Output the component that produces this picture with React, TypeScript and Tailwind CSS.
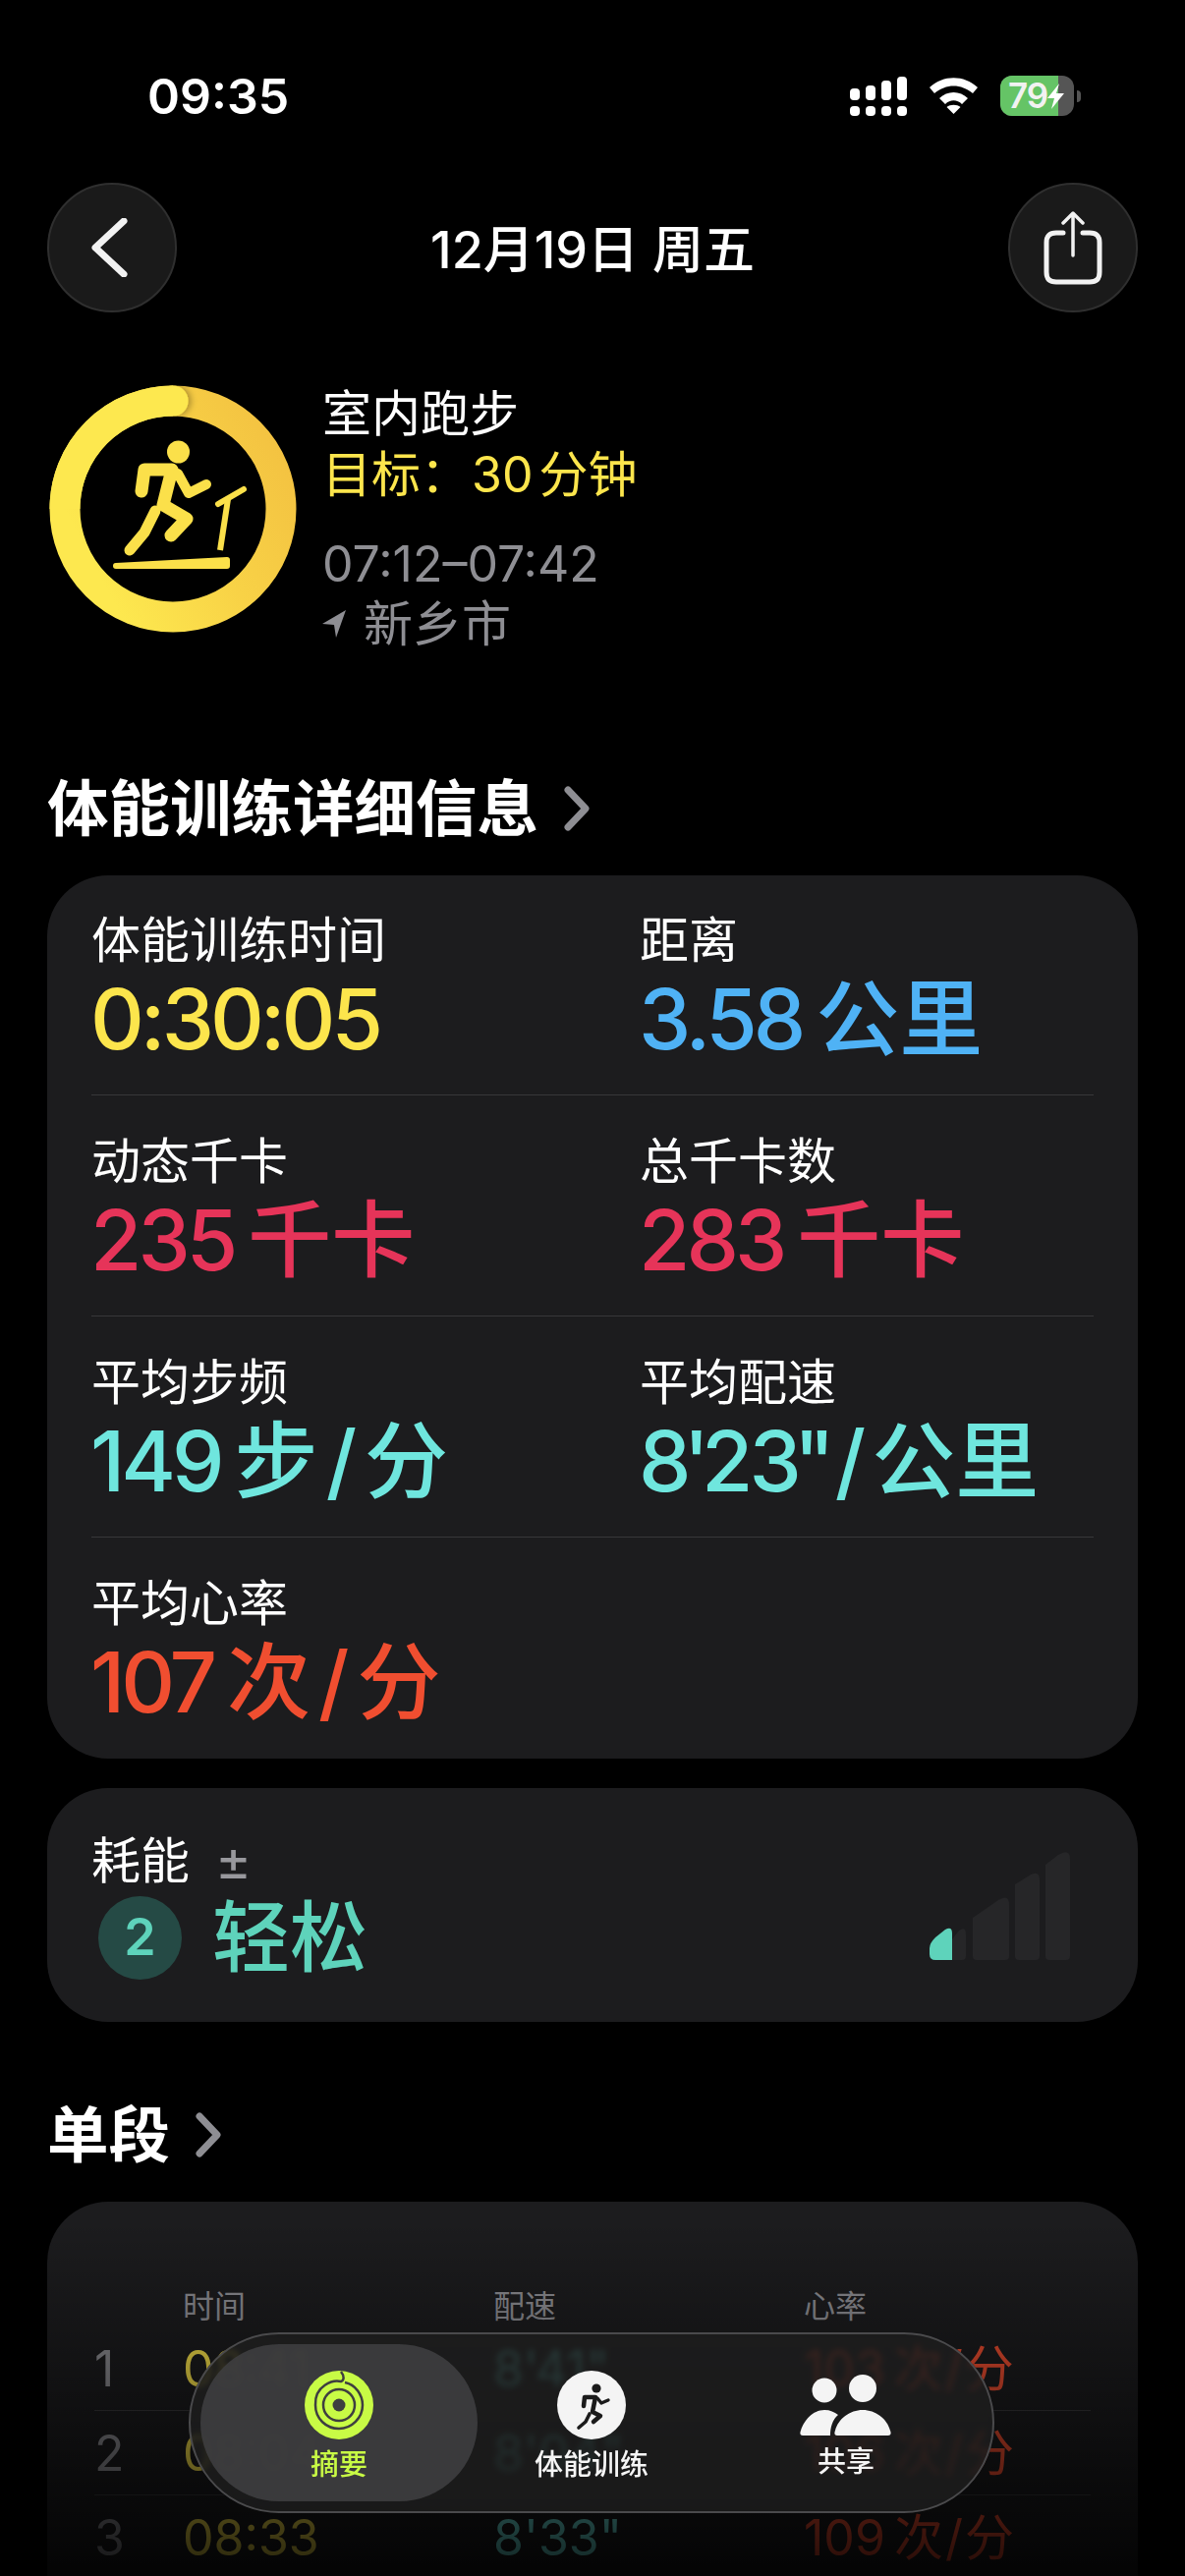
const CJK = "font-['Inter','Noto_Sans_CJK_SC',sans-serif]";

function Metric({ label, value, unit, color }: { label: string; value: React.ReactNode; unit?: React.ReactNode; color: string }) {
  return (
    <div className="flex flex-col">
      <div className="text-[50px] leading-[62px] text-white">{label}</div>
      <div className={`flex h-[100px] items-center whitespace-nowrap text-[85px] font-medium ${color}`}>
        <span className="-ml-[1px] tracking-[-4px]">{value}</span>
        {unit && <span className="ml-[14px]">{unit}</span>}
      </div>
    </div>
  );
}

function PerMinute({ word }: { word: string }) {
  return (
    <>
      {word}
      <span className="mx-[8px]">/</span>分
    </>
  );
}

function StatusBar() {
  return (
    <div className="flex h-[186px] items-start justify-between pr-[106px] pl-[150px] pt-[68px]">
      <span className="text-[50px] leading-[60px] font-semibold text-white">09:35</span>
      <div className="flex items-center gap-[23px] pt-[9px]">
        <svg width="58" height="40" viewBox="0 0 58 40" fill="#fff">
          <rect x="0" y="12" width="10" height="12" rx="4" />
          <rect x="16" y="9" width="10" height="15" rx="4" />
          <rect x="32" y="4" width="10" height="20" rx="4" />
          <rect x="48" y="0" width="10" height="24" rx="4" />
          <rect x="0" y="30" width="10" height="10" rx="4" />
          <rect x="16" y="30" width="10" height="10" rx="4" />
          <rect x="32" y="30" width="10" height="10" rx="4" />
          <rect x="48" y="30" width="10" height="10" rx="4" />
        </svg>
        <svg width="49" height="37" viewBox="0 0 49 37" fill="#fff">
          <path d="M0 10C14 -3 35 -3 49 10L44 16C32 6 17 6 5 16Z" />
          <path d="M10 21C18 13 31 13 39 21L33 27C28 22 21 22 16 27Z" />
          <path d="M24.5 37L17.5 30C21 27 28 27 31.5 30Z" />
        </svg>
        <div className="flex items-center gap-[3px]">
          <div className="relative flex h-[41px] w-[75px] items-center overflow-hidden rounded-[12px] bg-[#555]">
            <div className="absolute inset-y-0 left-0 w-[59px] bg-[#65c466]" />
            <span className="relative ml-[8px] text-[35px] leading-none font-semibold tracking-[-1px] text-[#f2f2f2]">79</span>
            <svg className="relative" width="17" height="26" viewBox="0 0 17 26" fill="#fff">
              <path d="M12 0L0 15H7L4 26L17 10H9Z" />
            </svg>
          </div>
          <div className="h-[12px] w-[4px] rounded-r-full bg-[#555]" />
        </div>
      </div>
    </div>
  );
}

function NavBar() {
  return (
    <div className="flex items-center justify-between px-[48px]">
      <div className="flex size-[132px] items-center justify-center rounded-full border-2 border-[#2f2f2f] bg-[#1a1a1a] pr-[6px]">
        <svg width="40" height="60" viewBox="0 0 40 60" fill="none" stroke="#f2f2f2" strokeWidth="7" strokeLinecap="round" strokeLinejoin="round">
          <path d="M35 3L6 30L35 57" />
        </svg>
      </div>
      <span className="mt-[5px] text-[52px] leading-none font-medium text-white">12月19日 周五</span>
      <div className="flex size-[132px] items-center justify-center rounded-full border-2 border-[#2f2f2f] bg-[#1a1a1a]">
        <svg width="60" height="76" viewBox="0 0 60 76" fill="none" stroke="#f2f2f2" strokeWidth="3.5" strokeLinecap="round" strokeLinejoin="round">
          <path d="M30 46V3M20 13L30 3L40 13" />
          <path d="M20 23H13C6 23 3 26 3 33V63C3 70 6 73 13 73H47C54 73 57 70 57 63V33C57 26 54 23 47 23H40" strokeWidth="5" />
        </svg>
      </div>
    </div>
  );
}

function WorkoutRing() {
  return (
    <svg width="252" height="252" viewBox="0 0 252 252" fill="none">
      <defs>
        <linearGradient id="ring" x1="1" y1="0.1" x2="0.05" y2="0.6">
          <stop offset="0" stopColor="#f3c141" />
          <stop offset="0.5" stopColor="#f8d246" />
          <stop offset="1" stopColor="#fde84f" />
        </linearGradient>
        <filter id="capShadow" x="-60%" y="-60%" width="220%" height="220%">
          <feDropShadow dx="3" dy="0" stdDeviation="3" floodColor="#000" floodOpacity="0.3" />
        </filter>
      </defs>
      <circle cx="126" cy="126" r="110" stroke="url(#ring)" strokeWidth="31" />
      <circle cx="126" cy="16" r="15.5" fill="#fde84f" filter="url(#capShadow)" />
      <path d="M126 16A110 110 0 0 0 16 126" stroke="#fde84f" strokeWidth="31" />
      <g stroke="#fbe04a" strokeLinecap="round" strokeLinejoin="round">
        <circle cx="131.5" cy="68" r="11.5" fill="#fbe04a" stroke="none" />
        <path d="M94 108L97 86H125L116 122L140 136L124 153" strokeWidth="13" />
        <path d="M131 90L142 110L160 101" strokeWidth="10" />
        <path d="M108 128L97 150L82 168" strokeWidth="11" />
        <path d="M68 184L181 178V184Z" fill="#fbe04a" strokeWidth="6" />
        <path d="M174 168L182 116" strokeWidth="6" strokeLinecap="butt" />
        <path d="M172 121L198 106" strokeWidth="6" />
      </g>
    </svg>
  );
}

function WorkoutHeader() {
  return (
    <div className="mt-[74px] flex gap-[26px] pl-[50px]">
      <WorkoutRing />
      <div className="-mt-[2px] flex flex-col text-[50px]">
        <div className="leading-[62px] text-white">室内跑步</div>
        <div className="leading-[62px] text-[#fce54c]">
          目标：<span className="ml-[2px]">30</span>
          <span className="ml-[6px]">分钟</span>
        </div>
        <div className="mt-[29px] leading-[62px] text-[#8e8e93]">07:12–07:42</div>
        <div className="flex items-center gap-[18px] leading-[60px] text-[#8e8e93]">
          <svg width="24" height="28" viewBox="0 0 24 28" fill="#8e8e93">
            <path d="M24 0L0 14L12 15L14 28Z" />
          </svg>
          新乡市
        </div>
      </div>
    </div>
  );
}

function SectionTitle({ text }: { text: string }) {
  return (
    <div className="flex items-center gap-[24px] pl-[48px]">
      <span className="text-[62.5px] leading-[76px] font-bold text-white">{text}</span>
      <svg width="30" height="48" viewBox="0 0 30 48" fill="none" stroke="#8e8e93" strokeWidth="7" strokeLinecap="round" strokeLinejoin="round">
        <path d="M6 5L24 24L6 43" />
      </svg>
    </div>
  );
}

function MetricsCard() {
  return (
    <div className="mx-[48px] mt-[30px] rounded-[62px] bg-[#1c1c1e] px-[45px] pb-[27px]">
      <div className="grid grid-cols-[558px_1fr] border-b border-[#38383a] pt-[35px] pb-[26px]">
        <Metric label="体能训练时间" value="0:30:05" color="text-[#fce54c]" />
        <Metric label="距离" value="3.58" unit="公里" color="text-[#4fb2f5]" />
      </div>
      <div className="grid grid-cols-[558px_1fr] border-b border-[#38383a] pt-[36px] pb-[26px]">
        <Metric label="动态千卡" value="235" unit="千卡" color="text-[#e63459]" />
        <Metric label="总千卡数" value="283" unit="千卡" color="text-[#e63459]" />
      </div>
      <div className="grid grid-cols-[558px_1fr] border-b border-[#38383a] pt-[36px] pb-[26px]">
        <Metric label="平均步频" value="149" unit={<PerMinute word="步" />} color="text-[#6fe6de]" />
        <Metric
          label="平均配速"
          value={
            <>
              8<span className="-mx-[4px]">'</span>23<span className="-mx-[4px]">"</span>
            </>
          }
          unit={
            <>
              <span className="-ml-[6px] mr-[6px]">/</span>公里
            </>
          }
          color="text-[#6fe6de]"
        />
      </div>
      <div className="pt-[36px]">
        <Metric label="平均心率" value="107" unit={<PerMinute word="次" />} color="text-[#f04e30]" />
      </div>
    </div>
  );
}

function EffortCard() {
  return (
    <div className="mx-[48px] mt-[30px] flex h-[238px] items-end justify-between rounded-[62px] bg-[#1c1c1e] pr-[69px] pb-[42px] pl-[45px]">
      <div className="flex flex-col">
        <div className="flex items-center gap-[26px] text-[50px] leading-[60px] text-white">
          耗能
          <span className="text-[56px] leading-none text-[#98989d]">±</span>
        </div>
        <div className="mt-[4px] flex items-center gap-[31px] pl-[7px]">
          <div className="flex size-[85px] items-center justify-center rounded-full bg-[#254a45] text-[52px] font-semibold text-[#5ed3bb]">2</div>
          <span className="text-[79px] leading-[88px] font-medium text-[#5ed3bb]">轻松</span>
        </div>
      </div>
      <svg className="mb-[21px]" width="143" height="111" viewBox="0 0 143 111">
        <path d="M23 111V90L30 81Q37 76 37 85V107Q37 111 33 111Z" fill="#262628" />
        <path d="M44 107V68L70 50Q81 43 81 55V107Q81 111 77 111H48Q44 111 44 107Z" fill="#262628" />
        <path d="M87 107V34L100 26Q112 18 112 30V107Q112 111 108 111H91Q87 111 87 107Z" fill="#262628" />
        <path d="M118 107V14L131 4Q143 -3 143 8V107Q143 111 139 111H122Q118 111 118 107Z" fill="#262628" />
        <path d="M0 105V99Q0 94 6 88L16 80Q23 76 23 84V111H6Q0 111 0 105Z" fill="#5ed3bb" />
      </svg>
    </div>
  );
}

function SplitRow({ n, time, pace, rate, line }: { n: string; time: string; pace: string; rate: string; line?: boolean }) {
  return (
    <div className={`grid h-[86px] grid-cols-[90px_316px_316px_1fr] items-center text-[50px] leading-none ${line ? "border-b border-[#38383a]" : ""}`}>
      <span className="text-[#8e8e93]">{n}</span>
      <span className="text-[#fce54c]">{time}</span>
      <span className="text-[#6fe6de]">{pace}</span>
      <span className="whitespace-nowrap text-[#f04e30]">
        {rate}
        <span className="ml-[9px]">次<span className="mx-[2px]">/</span>分</span>
      </span>
    </div>
  );
}

function SplitsCard() {
  return (
    <div className="mx-[48px] mt-[30px] rounded-t-[62px] bg-[#1c1c1e] px-[48px] pt-[87px] pb-[100px]">
      <div className="grid grid-cols-[90px_316px_316px_1fr] text-[32px] leading-[40px] text-[#8e8e93]">
        <span />
        <span>时间</span>
        <span>配速</span>
        <span>心率</span>
      </div>
      <SplitRow n="1" time="08:41" pace={"8'41\""} rate="103" line />
      <SplitRow n="2" time="08:04" pace={"8'04\""} rate="106" line />
      <SplitRow n="3" time="08:33" pace={"8'33\""} rate="109" />
    </div>
  );
}

function Tab({ label, width, active, children }: { label: string; width: string; active?: boolean; children: React.ReactNode }) {
  return (
    <div className={`flex h-full ${width} flex-col items-center justify-center gap-[9px] rounded-full pt-[6px] ${active ? "bg-[#3e3e40]/90" : ""}`}>
      {children}
      <span className={`text-[29px] leading-[34px] font-medium ${active ? "text-[#c8fb45]" : "text-[#f5f5f5]"}`}>{label}</span>
    </div>
  );
}

function TabBar() {
  return (
    <div className="absolute top-[2374px] left-[192px] flex h-[184px] w-[820px] items-center rounded-full border-2 border-[#4a4a4c] bg-[#1e1e1e]/80 py-[10px] pr-[6px] pl-[10px] backdrop-blur-[3px]">
      <Tab label="摘要" width="w-[282px]" active>
        <svg width="70" height="70" viewBox="0 0 70 70">
          <circle cx="35" cy="35" r="35" fill="#c8fb45" />
          <g fill="none" stroke="#3e3e40" strokeWidth="2.5">
            <path d="M37 1C41 6 40 10 37 11C29 9 10 15 11 35C11 49 22 59 35 59C48 59 59 48 59 35C59 25 52 14 41 12" />
            <circle cx="35" cy="35" r="16" />
          </g>
          <circle cx="35" cy="35" r="6.5" fill="#3e3e40" />
        </svg>
      </Tab>
      <Tab label="体能训练" width="w-[232px]">
        <svg width="70" height="70" viewBox="0 0 70 70">
          <circle cx="35" cy="35" r="35" fill="#f4f4f4" />
          <circle cx="40" cy="18" r="4.6" fill="#1b1b1b" />
          <g fill="none" stroke="#1b1b1b" strokeLinecap="round" strokeLinejoin="round">
            <path d="M27 36L28 27H39L36 42L44 46L37 52" strokeWidth="4.5" />
            <path d="M41 28L45 33L52 30" strokeWidth="3.4" />
            <path d="M33 44L29 52L22 58" strokeWidth="3.6" />
          </g>
        </svg>
      </Tab>
      <Tab label="共享" width="w-[286px]">
        <svg width="94" height="64" viewBox="0 0 94 64" fill="#f4f4f4">
          <circle cx="25" cy="17" r="12.5" />
          <circle cx="64" cy="15" r="14" />
          <path d="M3 63C0 63 0 60 1 58C4 48 13 37 25 37C31 37 35 39 39 42C33 47 31 55 31 63Z" />
          <path d="M38 63C35 63 35 60 36 58C39 46 51 37 64 37C77 37 89 46 92 58C93 60 93 63 90 63Z" />
        </svg>
      </Tab>
    </div>
  );
}

export default function App() {
  return (
    <div className={`relative h-[2622px] w-[1206px] overflow-hidden bg-black ${CJK}`}>
      <StatusBar />
      <NavBar />
      <WorkoutHeader />
      <div className="mt-[120px]">
        <SectionTitle text="体能训练详细信息" />
      </div>
      <MetricsCard />
      <EffortCard />
      <div className="mt-[77px]">
        <SectionTitle text="单段" />
      </div>
      <SplitsCard />
      <div className="pointer-events-none absolute inset-x-0 top-[2260px] bottom-0 bg-gradient-to-b from-transparent to-black/85" />
      <TabBar />
    </div>
  );
}
